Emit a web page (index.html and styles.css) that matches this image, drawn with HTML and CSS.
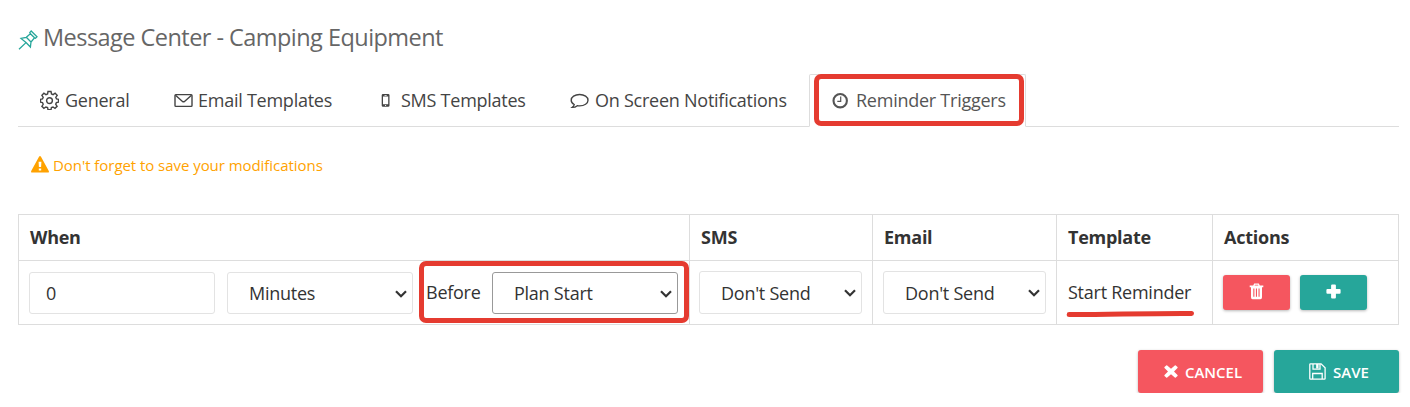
FILE: index.html
```html
<!DOCTYPE html>
<html lang="en">
<head>
<meta charset="utf-8">
<title>Message Center</title>
<link rel="stylesheet" href="styles.css">
</head>
<body>
<main class="page">
  <h1 class="title">
    <svg class="pin" width="20" height="20" viewBox="0 0 20 20"><path d="M13.2 1 19 6.8 17.5 8.3 16.5 7.8 13 12 12.4 17 8 12.6 3 8.4 8.3 7.3 12.4 3.7 11.8 2.5Z M8.3 7.3 13 12 M12.4 3.7 16.5 7.8 M8 12.6 1 19.2"/></svg>
    <span>Message Center - Camping Equipment</span>
  </h1>
  <nav class="tabs">
    <a class="tab tab-general"><svg class="line" width="19" height="20" viewBox="0 0 19 20"><path d="M8 1.500h3l.5 2.400 1.600.7 2-1.400 2.100 2.100-1.400 2 .7 1.600 2 .4v2.900l-2.100.4-.7 1.600 1.400 2.100-2.100 2-2-1.300-1.600.6-.4 2.200H8l-.4-2.200-1.700-.6-2 1.300-2-2 1.300-2-.7-1.700-2-.4V9.300l2-.4.7-1.600-1.300-2 2-2.100 2 1.400 1.700-.7Z"/><circle cx="9.500" cy="10.600" r="2.900"/></svg><span>General</span></a>
    <a class="tab tab-email"><svg class="line" width="19" height="20" viewBox="0 0 19 20"><rect x="1" y="4.600" width="17" height="11.800" rx=".8"/><path d="m1.500 5.200 7 6.200q1 .9 2 0l7-6.200"/></svg><span>Email Templates</span></a>
    <a class="tab tab-sms"><svg width="10" height="20" viewBox="0 0 10 20"><path fill-rule="evenodd" d="M2 4h5.200q1.300 0 1.300 1.300v10.200q0 1.300-1.300 1.300H2q-1.300 0-1.300-1.300V5.300Q.7 4 2 4Zm0 2.500v7.700h5.200V6.500Zm1.500-1.400v.6h2.200v-.6Zm.6 9.900v1h1v-1Z"/></svg><span>SMS Templates</span></a>
    <a class="tab tab-screen"><svg class="line" width="19" height="20" viewBox="0 0 19 20"><path d="M9.600 4.500c4.800 0 8.400 2.500 8.400 5.700s-3.600 5.700-8.400 5.700q-1.200 0-2.300-.2-2 1.700-5 1.700 1.700-1.300 1.900-2.900C2.300 13.500 1.200 12 1.200 10.200c0-3.200 3.600-5.700 8.400-5.700Z"/></svg><span>On Screen Notifications</span></a>
    <a class="tab tab-reminder"><svg width="17" height="20" viewBox="0 0 17 20"><circle class="ring" cx="8.200" cy="10.700" r="6.700"/><path class="hands" d="M8.700 6.600v4.700H5.300"/></svg><span>Reminder Triggers</span><i class="marker marker-tab"></i></a>
  </nav>
  <p class="notice"><svg width="18" height="17" viewBox="0 0 18 17"><path fill-rule="evenodd" d="M8 .7q1-1.300 2 0l7.800 14.200q.6 1.600-1 1.700H1.200q-1.600-.1-1-1.700ZM7.600 5.700l.3 5.400h2.200l.3-5.400Zm.2 6.700v2.200h2.400v-2.200Z"/></svg><span>Don't forget to save your modifications</span></p>
  <table class="triggers">
    <colgroup><col class="c-when"><col class="c-sms"><col class="c-email"><col class="c-template"><col class="c-actions"></colgroup>
    <tr><th>When</th><th>SMS</th><th>Email</th><th>Template</th><th>Actions</th></tr>
    <tr>
      <td><div class="when">
        <input class="field amount" value="0">
        <label class="pick unit"><select class="field"><option>Minutes</option></select><svg width="12" height="8" viewBox="0 0 12 8"><path d="m1 1.200 5 5 5-5"/></svg></label>
        <span class="before">Before</span>
        <label class="pick event"><select class="field strong"><option>Plan Start</option></select><svg width="12" height="8" viewBox="0 0 12 8"><path d="m1 1.200 5 5 5-5"/></svg></label>
        <i class="marker marker-when"></i>
      </div></td>
      <td><label class="pick send send-sms"><select class="field"><option>Don't Send</option></select><svg width="12" height="8" viewBox="0 0 12 8"><path d="m1 1.200 5 5 5-5"/></svg></label></td>
      <td><label class="pick send"><select class="field"><option>Don't Send</option></select><svg width="12" height="8" viewBox="0 0 12 8"><path d="m1 1.200 5 5 5-5"/></svg></label></td>
      <td><div class="template"><span>Start Reminder</span><svg class="underline" width="130" height="8" viewBox="0 0 130 8"><path d="M3.200 4.600 C40 4.800 80 3.200 125.500 3.500"/></svg></div></td>
      <td><div class="actions">
        <button class="btn small red" aria-label="Delete"><svg width="15" height="17" viewBox="0 0 15 17"><path fill-rule="evenodd" d="M5.200.5h4.600l1 2.100h3.500v1.700H13v10q0 2-1.600 2H3.600q-1.600 0-1.600-2v-10H.7V2.600h3.500Zm.8 1.300-.4.800h3.800L9 1.800ZM4.300 5.500v8.200h1.100V5.500Zm2.600 0v8.200H8V5.500Zm2.600 0v8.200h1.100V5.500Z"/></svg></button>
        <button class="btn small green" aria-label="Add"><svg width="15" height="15" viewBox="0 0 15 15"><path d="M6.100.4h2.800q1 0 1 1v3.700h3.700q1 0 1 1v2.700q0 1-1 1H9.900v3.700q0 1-1 1H6.100q-1 0-1-1V9.800H1.400q-1 0-1-1V6.100q0-1 1-1h3.700V1.400q0-1 1-1Z"/></svg></button>
      </div></td>
    </tr>
  </table>
  <footer class="footer">
    <button class="btn large red"><svg width="14" height="13" viewBox="0 0 14 13"><path d="m3.200.4 3.800 3.400L10.800.4q.5-.4 1 0l1.700 1.700q.4.500 0 1L10 6.500l3.500 3.400q.4.500 0 1l-1.700 1.700q-.5.400-1 0L7 9.200l-3.800 3.400q-.5.400-1 0L.5 10.900q-.4-.5 0-1L4 6.500.5 3.100q-.4-.5 0-1L2.200.4q.5-.4 1 0Z"/></svg><span>CANCEL</span></button>
    <button class="btn large green save"><svg class="disk" width="17" height="17" viewBox="0 0 17 17"><path d="M.8 1.500q0-.7.700-.7h10.600l4 4v10.600q0 .7-.7.700H1.500q-.7 0-.7-.7ZM4 1v5.200h7V1M3.700 16v-5.500h9.500V16M7.800 1.500h1.100v3H7.800Z"/></svg><span>SAVE</span></button>
  </footer>
</main>
</body>
</html>
```
FILE: styles.css
```css
* { box-sizing: border-box; }
body { margin: 0; background: #fff; color: #333; font-family: "Open Sans", sans-serif; font-size: 18px; font-weight: 400; letter-spacing: -.25px; }
svg { display: block; flex: none; fill: currentColor; }
.page { padding: 20px 11px 0 18px; }
.title { display: flex; align-items: center; gap: 5px; height: 36px; margin: 0; font-size: 23.500px; font-weight: 400; line-height: 34px; letter-spacing: -.54px; color: #666; white-space: nowrap; }
.title span { margin-top: -2px; }
.pin { margin-top: 3px; fill: none; stroke: #26a69a; stroke-width: 1.300; }
.tabs { display: flex; height: 53px; margin-top: 18px; border-bottom: 1px solid #ddd; }
.tab { position: relative; display: flex; align-items: center; gap: 6px; height: 53px; padding: 0 0 2px 22px; color: #444; white-space: nowrap; }
.tab .line { fill: none; stroke: currentColor; stroke-width: 1.400; }
.tab-general { width: 134px; }
.tab-email { width: 203px; gap: 5px; }
.tab-sms { width: 193px; padding-left: 26px; gap: 10px; }
.tab-screen { width: 261px; }
.tab-reminder { width: 217px; gap: 7px; border: 1px solid #ddd; border-bottom-color: #fff; border-radius: 2px 2px 0 0; color: #555; }
.ring { fill: none; stroke: currentColor; stroke-width: 2.100; }
.hands { fill: none; stroke: currentColor; stroke-width: 1.200; }
.marker { position: absolute; border: 5px solid #e53b30; border-radius: 7px; pointer-events: none; }
.marker-tab { top: -1px; left: 4px; width: 210px; height: 52px; }
.notice { display: flex; align-items: center; gap: 4px; height: 26px; margin: 25px 0 0 13px; font-size: 15px; letter-spacing: -.05px; color: #ffa200; }
.notice svg { margin-top: -2px; }
.triggers { width: 1381px; margin-top: 36px; table-layout: fixed; border-collapse: collapse; }
.c-when { width: 671px; }
.c-sms { width: 183px; }
.c-email { width: 184px; }
.c-template { width: 156px; }
.triggers th { height: 46px; padding: 0 10px 2px 11px; border: 1px solid #ddd; font-weight: 700; line-height: 24px; text-align: left; }
.triggers td { height: 64px; padding: 0 9px 0 10px; border: 1px solid #ddd; }
.when { position: relative; display: flex; align-items: center; height: 63px; }
.field { display: block; width: 100%; height: 42px; padding: 0 21px; border: 1px solid #e3e3e3; border-radius: 3px; background: #fff; color: #333; font: inherit; letter-spacing: inherit; appearance: none; outline: 0; }
.amount { width: 186px; padding: 0 16px; }
.pick { position: relative; display: block; }
.pick svg { position: absolute; top: 18px; right: 6px; fill: none; stroke: #333; stroke-width: 2.200; }
.unit { width: 186px; margin-left: 12px; }
.before { width: 66px; margin: -2px 0 0 13px; }
.event { width: 186px; }
.strong { border-color: #999; }
.marker-when { top: 0; left: 390px; width: 270px; height: 62px; }
.send { width: 163px; }
.send-sms { margin-left: -1px; }
.send .field { height: 43px; }
.template { position: relative; top: -1px; padding-left: 1px; white-space: nowrap; }
.underline { position: absolute; top: 30px; left: -1px; fill: none; stroke: #e53b30; stroke-width: 5; stroke-linecap: round; }
.actions { display: flex; gap: 10px; }
.btn { display: flex; align-items: center; justify-content: center; padding: 0; border: 0; border-radius: 3px; color: #fff; font: 600 15px "Open Sans", sans-serif; box-shadow: 0 1px 3px rgba(0,0,0,.28); }
.small { width: 67px; height: 35px; }
.small svg { margin-top: -3px; }
.large { gap: 7px; width: 125px; height: 43px; padding-left: 5px; }
.red { background: #f5565f; }
.green { background: #26a69a; }
.disk { fill: none; stroke: currentColor; stroke-width: 1.300; }
.footer { display: flex; justify-content: flex-end; gap: 11px; margin-top: 25px; }
```
